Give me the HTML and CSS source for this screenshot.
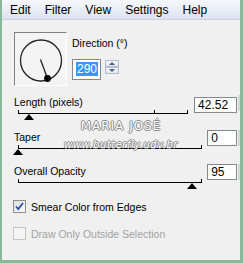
FILE: index.html
```html
<!DOCTYPE html>
<html lang="en">
<head>
  <meta charset="UTF-8" />
  <title>Motion Blur</title>
  <link rel="stylesheet" href="styles.css">
</head>
<body>
  <div class="window">
    <div class="menubar">
      <span>Edit</span>
      <span>Filter</span>
      <span>View</span>
      <span>Settings</span>
      <span>Help</span>
    </div>

    <div class="panel">
      <div class="dir-row">
        <div class="dial">
          <svg width="51" height="52" viewBox="0 0 51 52">
            <circle cx="26" cy="27.5" r="20.5" fill="none" stroke="#222" stroke-width="1.3"/>
            <line x1="25.5" y1="26.5" x2="32.5" y2="45.5" stroke="#222" stroke-width="1.3"/>
            <circle cx="32.5" cy="45.5" r="3.4" fill="#000"/>
          </svg>
        </div>
        <div class="dir-ctrl">
          <div class="label">Direction (°)</div>
          <div class="dir-input">
            <div class="field field-dir"><span class="sel">290</span></div>
            <div class="spin">
              <div class="spin-btn"><span class="arr-up"></span></div>
              <div class="spin-btn"><span class="arr-down"></span></div>
            </div>
          </div>
        </div>
      </div>

      <div class="slider-group group-length">
        <div class="slider-side">
          <div class="label">Length (pixels)</div>
          <div class="track track-length"><span class="tick-mid"></span></div>
          <div class="thumb-row"><span class="thumb thumb-length"></span></div>
        </div>
        <div class="field field-num field-wide">42.52</div>
        <div class="sliver"></div>
      </div>

      <div class="slider-group group-taper">
        <div class="slider-side">
          <div class="label">Taper</div>
          <div class="track"></div>
          <div class="thumb-row"><span class="thumb thumb-taper"></span></div>
        </div>
        <div class="field field-num">0</div>
        <div class="sliver"></div>
      </div>

      <div class="slider-group group-opacity">
        <div class="slider-side">
          <div class="label">Overall Opacity</div>
          <div class="track"></div>
          <div class="thumb-row"><span class="thumb thumb-opacity"></span></div>
        </div>
        <div class="field field-num">95</div>
        <div class="sliver"></div>
      </div>

      <label class="check check-first">
        <span class="box">
          <svg width="11" height="11" viewBox="0 0 11 11">
            <path d="M2 5.5 L4.3 8 L9 2" fill="none" stroke="#2b4fb0" stroke-width="1.8"/>
          </svg>
        </span>
        Smear Color from Edges
      </label>
      <label class="check disabled">
        <span class="box"></span>
        Draw Only Outside Selection
      </label>
    </div>

    <div class="watermark">
      <div class="wm-name">MARIA JOSÉ</div>
      <div class="wm-url">www.butterfly.udv.br</div>
    </div>
  </div>
</body>
</html>
```

FILE: styles.css
```css
html, body {
  margin: 0;
  padding: 0;
  background: #f0f0f0;
}

.window {
  position: relative;
  width: 243px;
  height: 263px;
  box-sizing: border-box;
  font-family: 'Liberation Sans', Arial, sans-serif;
  font-size: 10.5px;
  color: #000;
  background: #f0f0f0;
  border-left: 2px solid #8cb89a;
  border-right: 3px solid #8cb89a;
  border-bottom: 3px solid #8cb89a;
  overflow: hidden;
}

.menubar {
  height: 20px;
  margin-left: -2px;
  margin-right: -3px;
  box-sizing: border-box;
  display: flex;
  align-items: center;
  padding-left: 10px;
  gap: 14px;
  font-size: 12px;
  background: linear-gradient(#f5f7fc, #dde3f0);
  border-bottom: 1px solid #c9d2e4;
}

.panel {
  padding: 12px 0 0 12px;
}

.label {
  line-height: 12px;
}

.dir-row {
  display: flex;
  gap: 5px;
}

.dial {
  width: 51px;
  height: 52px;
  border-top: 1px solid #808080;
  border-left: 1px solid #808080;
  border-right: 1px solid #fff;
  border-bottom: 1px solid #fff;
  background: #f4f4f4;
}

.dial svg {
  display: block;
}

.dir-ctrl {
  padding-top: 5px;
}

.dir-input {
  display: flex;
  gap: 4px;
  margin-top: 10px;
}

.field {
  box-sizing: border-box;
  background: #fff;
  border: 1px solid #828790;
  line-height: 14px;
  font-size: 12px;
}

.field-dir {
  width: 29px;
  height: 21px;
  padding: 2px 0 0 3px;
}

.sel {
  background: #3399ff;
  color: #fff;
  padding: 0 1px;
}

.spin {
  display: flex;
  flex-direction: column;
  margin-top: 1px;
}

.spin-btn {
  width: 14px;
  height: 7px;
  box-sizing: border-box;
  border: 1px solid #b4bccb;
  background: linear-gradient(#f6f8fc, #dfe5ef);
  display: flex;
  justify-content: center;
  align-items: center;
}

.arr-up {
  border-left: 3px solid transparent;
  border-right: 3px solid transparent;
  border-bottom: 3px solid #4d6185;
}

.arr-down {
  border-left: 3px solid transparent;
  border-right: 3px solid transparent;
  border-top: 3px solid #4d6185;
}

.slider-group {
  display: flex;
  align-items: flex-start;
}

.group-length {
  margin-top: 10px;
}

.group-taper {
  margin-top: 11px;
}

.group-opacity {
  margin-top: 10px;
}

.slider-side {
  width: 189px;
}

.group-length .slider-side {
  width: 180px;
}

.track {
  position: relative;
  margin: 2px 0 0 4px;
  height: 3px;
  border-bottom: 1px solid #000;
  border-left: 1px solid #000;
  border-right: 1px solid #000;
}

.track-length {
  width: 168px;
}

.tick-mid {
  position: absolute;
  left: 135px;
  top: 0;
  width: 1px;
  height: 3px;
  background: #000;
}

.thumb-row {
  height: 6px;
}

.thumb {
  display: block;
  width: 0;
  height: 0;
  border-left: 5px solid transparent;
  border-right: 5px solid transparent;
  border-bottom: 6px solid #000;
}

.thumb-taper {
  margin-left: -1px;
}

.thumb-length {
  margin-left: 10px;
}

.thumb-opacity {
  margin-left: 173px;
}

.field-num {
  width: 30px;
  height: 16px;
  padding: 0 0 0 3px;
  margin-top: -1px;
  margin-left: 5px;
}

.field-wide {
  width: 44px;
  margin-top: 1px;
}

.sliver {
  width: 2px;
  height: 16px;
  margin-top: -1px;
  margin-left: 1px;
  background: #d6d6d6;
}

.check {
  display: flex;
  align-items: center;
  gap: 5px;
  margin-left: -1px;
  height: 13px;
}

.check-first {
  margin-top: 11px;
}

.check + .check {
  margin-top: 14px;
}

.box {
  width: 13px;
  height: 13px;
  box-sizing: border-box;
  border: 1px solid #8e8f8f;
  background: linear-gradient(135deg, #dcdcdc, #fbfbfb);
  display: flex;
  justify-content: center;
  align-items: center;
}

.disabled {
  color: #a3a3a3;
}

.disabled .box {
  border-color: #c4c4c4;
  background: #f4f4f4;
}

.watermark {
  position: absolute;
  left: 58px;
  top: 119px;
  width: 122px;
  text-align: center;
  color: #fff;
  text-shadow: 1px 0 0 #8a8a8a, -1px 0 0 #8a8a8a, 0 1px 0 #8a8a8a, 0 -1px 0 #8a8a8a;
  pointer-events: none;
}

.wm-name {
  font-family: 'DejaVu Sans', sans-serif;
  font-size: 12px;
  letter-spacing: 1px;
  line-height: 14px;
}

.wm-url {
  margin-top: 6px;
  font-family: 'DejaVu Sans', sans-serif;
  font-style: italic;
  font-size: 10px;
  letter-spacing: 0.5px;
  line-height: 12px;
}
```
